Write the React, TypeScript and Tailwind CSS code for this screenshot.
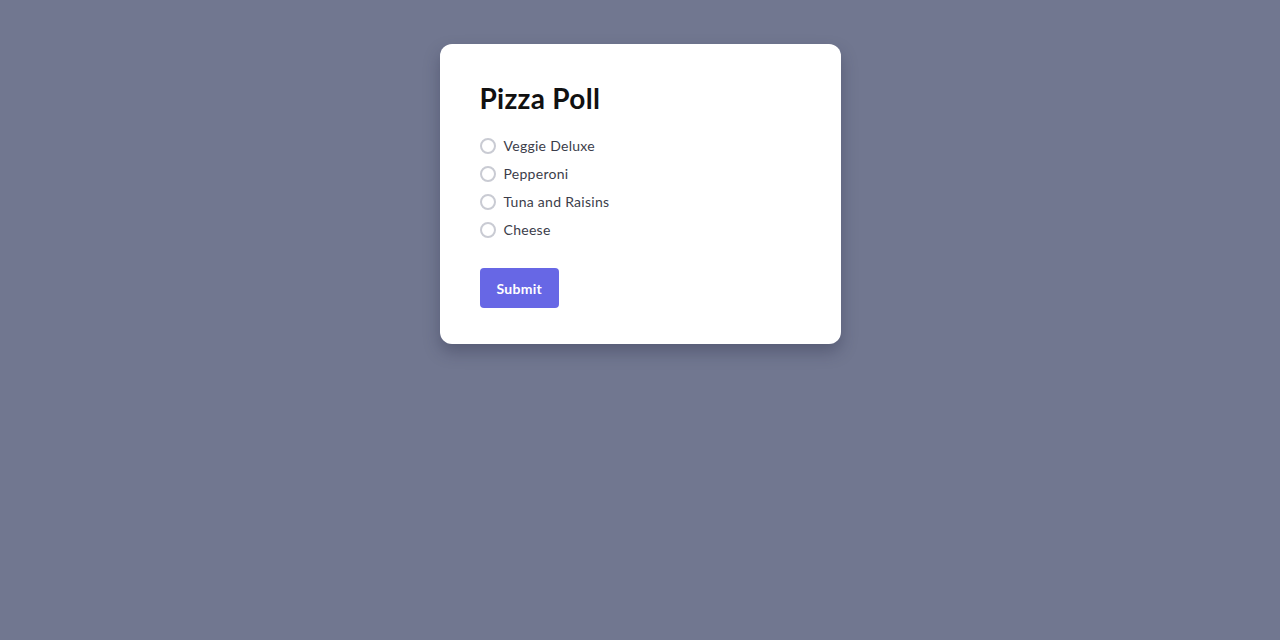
import React from 'react';

const options = ['Veggie Deluxe', 'Pepperoni', 'Tuna and Raisins', 'Cheese'];

export default function App() {
  return (
    <div
      className="min-h-screen bg-[#717790] flex justify-center pt-[44px]"
      style={{ fontFamily: 'Lato, "Open Sans", sans-serif' }}
    >
      <div className="w-[401px] h-[300px] bg-white rounded-xl shadow-[0_8px_16px_rgba(40,44,70,0.35)] px-10 pt-10">
        <h1 className="text-[28px] leading-[28px] font-bold text-[#111111] tracking-[0.01em] mb-[20px]">
          Pizza Poll
        </h1>
        <div className="flex flex-col">
          {options.map((opt) => (
            <label key={opt} className="h-7 flex items-center gap-2 cursor-pointer">
              <span className="w-4 h-4 rounded-full border-2 border-[#c9cbd3] bg-white" />
              <span className="text-[14px] leading-[20px] text-[#3b3d4a] tracking-[0.02em] -mt-px">{opt}</span>
            </label>
          ))}
        </div>
        <button className="mt-6 h-10 px-[17px] rounded bg-[#6767e5] text-white text-[14px] font-bold tracking-[0.02em]">
          Submit
        </button>
      </div>
    </div>
  );
}
